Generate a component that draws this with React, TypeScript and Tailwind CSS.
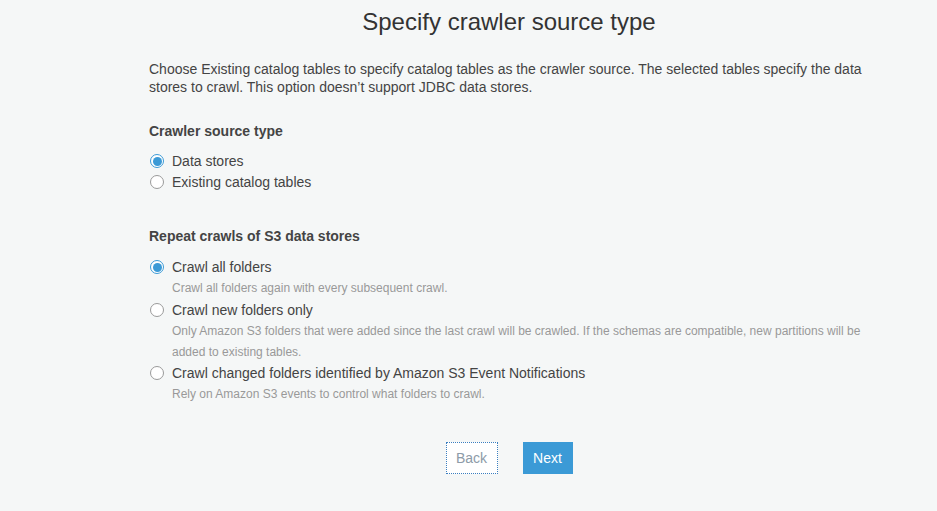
import React from "react";

function Radio({ checked }: { checked?: boolean }) {
  return (
    <span
      className={
        "mt-[3px] flex h-[14px] w-[14px] shrink-0 items-center justify-center rounded-full border bg-white " +
        (checked ? "border-[#3b9ad6]" : "border-[#9a9a9a]")
      }
    >
      {checked ? <span className="h-[9px] w-[9px] rounded-full bg-[#3b9ad6]" /> : null}
    </span>
  );
}

function Option({
  label,
  desc,
  checked,
}: {
  label: string;
  desc?: string;
  checked?: boolean;
}) {
  return (
    <div className="flex items-start gap-[8px] pl-[1px]">
      <Radio checked={checked} />
      <div className="flex flex-col">
        <span className="text-[14px] leading-[21px] text-[#444]">{label}</span>
        {desc ? (
          <span className="text-[12px] leading-[21px] text-[#999]">{desc}</span>
        ) : null}
      </div>
    </div>
  );
}

export default function App() {
  return (
    <div
      className="h-[511px] w-[937px] bg-[#f5f7f7]"
      style={{ fontFamily: '"Liberation Sans", Arial, sans-serif' }}
    >
      <div className="ml-[149px] flex w-[720px] flex-col">
        <h1 className="pt-[8px] text-center text-[24px] leading-[27px] text-[#333]">
          Specify crawler source type
        </h1>
        <p className="mt-[25px] text-[14px] leading-[18px] text-[#444]">
          Choose Existing catalog tables to specify catalog tables as the crawler source. The
          selected tables specify the data stores to crawl. This option doesn’t support JDBC data
          stores.
        </p>
        <h2 className="mt-[25px] text-[14px] font-bold leading-[20px] text-[#444]">
          Crawler source type
        </h2>
        <div className="mt-[10px] flex flex-col">
          <Option label="Data stores" checked />
          <Option label="Existing catalog tables" />
        </div>
        <h2 className="mt-[33px] text-[14px] font-bold leading-[20px] text-[#444]">
          Repeat crawls of S3 data stores
        </h2>
        <div className="mt-[11px] flex flex-col">
          <Option
            label="Crawl all folders"
            desc="Crawl all folders again with every subsequent crawl."
            checked
          />
          <div className="mt-[1px]">
            <Option
              label="Crawl new folders only"
              desc="Only Amazon S3 folders that were added since the last crawl will be crawled. If the schemas are compatible, new partitions will be added to existing tables."
            />
          </div>
          <Option
            label="Crawl changed folders identified by Amazon S3 Event Notifications"
            desc="Rely on Amazon S3 events to control what folders to crawl."
          />
        </div>
        <div className="mt-[37px] flex justify-center gap-[25px]">
          <button className="h-[32px] w-[52px] border border-dotted border-[#3b7fc0] bg-white text-[14px] text-[#8d9ba8]">
            Back
          </button>
          <button className="h-[32px] w-[50px] bg-[#3b9ad6] text-[14px] text-white">
            Next
          </button>
        </div>
      </div>
    </div>
  );
}
